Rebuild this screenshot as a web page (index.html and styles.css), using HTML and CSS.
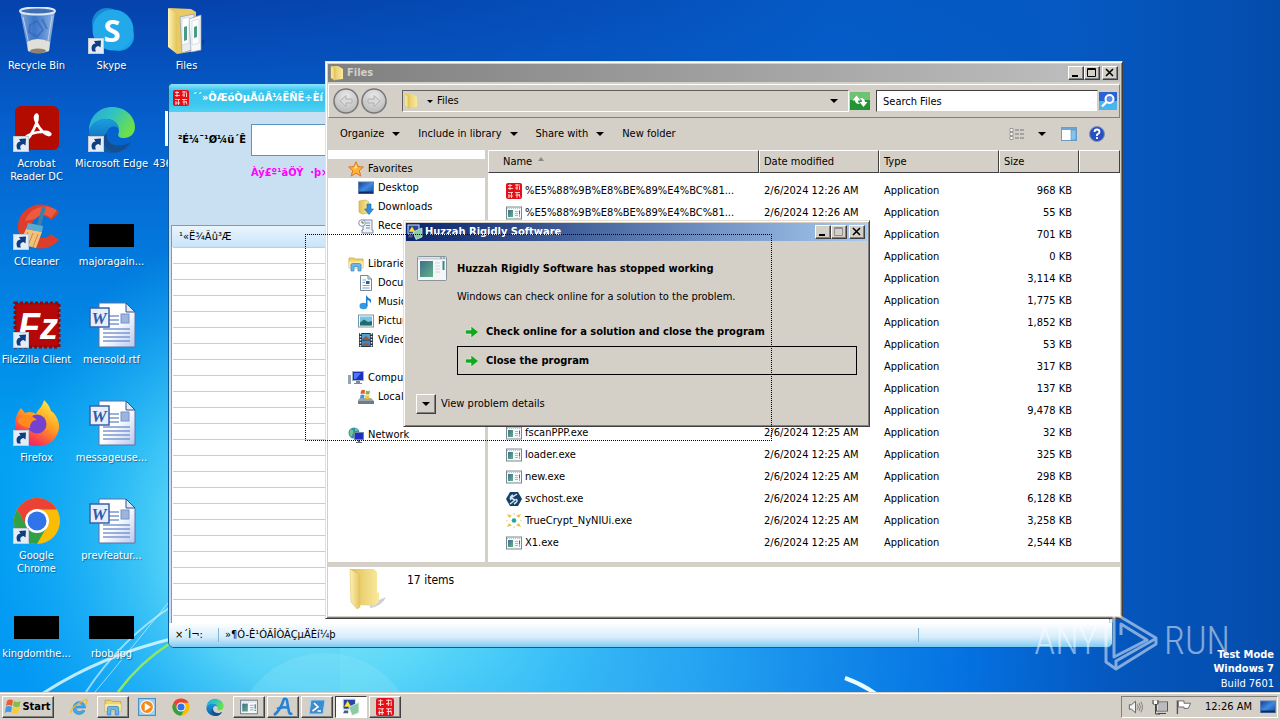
FILE: index.html
```html
<!DOCTYPE html>
<html lang="en">
<head>
<meta charset="utf-8">
<title>Desktop</title>
<link rel="stylesheet" href="styles.css">
</head>
<body>
<svg class="sprite" aria-hidden="true">
  <defs>
    <linearGradient id="gFold" x1="0" x2="1"><stop offset="0" stop-color="#fdf3b8"/><stop offset="1" stop-color="#e3c45a"/></linearGradient>
    <linearGradient id="gFoldB" x1="0" x2="1"><stop offset="0" stop-color="#e0bf55"/><stop offset="1" stop-color="#f9ea9d"/></linearGradient>
    <linearGradient id="gBin" x1="0" x2="1"><stop offset="0" stop-color="#a9c4e4" stop-opacity=".8"/><stop offset=".4" stop-color="#5f93d6" stop-opacity=".6"/><stop offset="1" stop-color="#b9d2ee" stop-opacity=".8"/></linearGradient>
    <linearGradient id="gEdge1" x1="0" y1="0" x2="1" y2=".5"><stop offset="0" stop-color="#2aa6e0"/><stop offset=".5" stop-color="#2fc3c0"/><stop offset="1" stop-color="#6be04a"/></linearGradient>
    <linearGradient id="gEdge2" x1="0" y1="0" x2="0" y2="1"><stop offset="0" stop-color="#1b9de2"/><stop offset="1" stop-color="#0c59a4"/></linearGradient>
    <linearGradient id="gFox" x1=".8" y1="0" x2=".2" y2="1"><stop offset="0" stop-color="#fff044"/><stop offset=".45" stop-color="#ff9a22"/><stop offset=".8" stop-color="#fb3a50"/><stop offset="1" stop-color="#e3158c"/></linearGradient>
    <linearGradient id="gDoc" x1="0" y1="0" x2="1" y2="1"><stop offset=".5" stop-color="#fff"/><stop offset="1" stop-color="#b5c8ee"/></linearGradient>
    <linearGradient id="gScr" x1="0" y1="0" x2="1" y2="1"><stop offset="0" stop-color="#123b96"/><stop offset=".5" stop-color="#3f8be0"/><stop offset="1" stop-color="#16469e"/></linearGradient>
    <linearGradient id="gApp" x1="0" y1="0" x2="1" y2="1"><stop offset="0" stop-color="#3d6f8e"/><stop offset="1" stop-color="#63b183"/></linearGradient>
    <radialGradient id="gNav" cx=".5" cy=".3" r=".7"><stop offset="0" stop-color="#e9e9e9"/><stop offset="1" stop-color="#b9b9b9"/></radialGradient>
  </defs>
  <symbol id="arrow" viewBox="0 0 16 16"><rect x=".5" y=".5" width="15" height="15" fill="#e4edf6" stroke="#c3ccd6"/><path d="M4.500 13.500C2.500 9 4 6 7.500 5.500L6 3 13 2.500 12.500 9.500 10.500 8C7.500 8.500 6.500 10.500 8 13.500Z" fill="#123c80"/></symbol>
  <symbol id="bin" viewBox="0 0 48 48"><path d="M7 4H42L36 44Q25 49 15 44Z" fill="url(#gBin)"/><ellipse cx="24.500" cy="4" rx="17.500" ry="3.500" fill="#3d6fb5" stroke="#dfe8f2" stroke-width="2"/><path d="M14 35Q24 29 37 35L36 44Q25 48 15 44Z" fill="#e2dfd8"/><ellipse cx="25" cy="44" rx="8" ry="2.500" fill="#8f8272"/><path d="M10 10L17 42M39 9L34 40" stroke="#dbe8f6" opacity=".7"/><path d="M17 18l7-4 6 9-6 7-8-5zM29 12l5 10" fill="none" stroke="#3064b8" stroke-width="2" opacity=".6"/></symbol>
  <symbol id="skype" viewBox="0 0 48 48"><rect x="4" y="1" width="30" height="30" rx="15" fill="#1789d0"/><circle cx="31" cy="29" r="15" fill="#16a4e8"/><circle cx="25" cy="23" r="20.500" fill="#22a9ea"/></symbol>
  <symbol id="files" viewBox="0 0 48 48"><path d="M28 38L42 32Q40 44 26 46Z" fill="#0a2c66" opacity=".35"/><path d="M6 1L28 2 33 5V44L14 47Z" fill="#e8c963"/><path d="M17 10L31 7V42L19 46Z" fill="#e9edf2" stroke="#8f9aa6" stroke-width=".7"/><path d="M26 12L38 8V43L28 45Z" fill="#f6f8fa" stroke="#9aa4ae" stroke-width=".7"/><path d="M19 12L26 10V36L19 38ZM29 14L36 12V36L29 38Z" fill="#fff" stroke="#c5ccd4" stroke-width=".6"/><path d="M21 20l3-1V33l-3 1zM31 20l3-1v11l-3 1z" fill="#4a9b86"/><path d="M5 1L14 7V47L5 40Z" fill="url(#gFold)"/></symbol>
  <symbol id="acrobat" viewBox="0 0 48 48"><rect x="2" y="1" width="44" height="44" rx="6" fill="#b30b00"/><path d="M23 10C20 13 25 22 30 27 38 33 40 28 33 27 24 26 15 29 11 34 8 38 13 37 17 31 22 23 25 15 24.500 11 24 9 23.500 9.500 23 10Z" fill="none" stroke="#fff" stroke-width="2.800"/></symbol>
  <symbol id="edge" viewBox="0 0 48 48"><path d="M1 26C1 12 11 2 24 2 38 2 47 12 47 22 47 29 42 33 36 33 31 33 29 31 31 27 31 19 26 14 19 14 10 14 3 19 1 26Z" fill="url(#gEdge1)"/><path d="M1 26C3 18 11 13 19 14 27 15 30 19 31 24 25 18 17 24 19 32 21 40 33 43 43 37 38 45 31 48 24 48 11 48 1 38 1 26Z" fill="url(#gEdge2)"/><path d="M19 28C17 38 28 45 43 37 38 45 31 48 25 47 15 45 12 32 19 28Z" fill="#144f93"/></symbol>
  <symbol id="ccleaner" viewBox="0 0 48 48"><path d="M46 10A23 22 0 1 0 46 37L38 31A11 11 0 1 1 38 17Z" fill="#dd3d2b"/><path d="M44 7A21 20 0 0 0 12 18L22 16Q30 8 38 15Z" fill="#f2684a" opacity=".7"/><path d="M31 4L26 22" stroke="#3c80a8" stroke-width="4"/><path d="M15 20L30 23 29 29 13 26Z" fill="#5baad0"/><path d="M13 26L29 29 23 45 3 40Q10 34 13 26Z" fill="#f1c27a"/><path d="M15 29L9 41M20 30L15 43M25 31L20 44" stroke="#cc8a45"/></symbol>
  <symbol id="filezilla" viewBox="0 0 48 48"><rect x="2" y="2" width="44" height="44" fill="#b50808" stroke="#8d0a0a" stroke-width="3" stroke-dasharray="3 2"/></symbol>
  <symbol id="word" viewBox="0 0 48 48"><path d="M11 2H38L47 11V46H11Z" fill="url(#gDoc)" stroke="#5873a8"/><path d="M38 2V11H47Z" fill="#dfe8f8" stroke="#33508a"/><path d="M21 15H31M21 19H31M15 23H31M15 28H42M15 32H42M15 36H42M15 40H42" stroke="#7b98cf" stroke-width="1.300"/><rect x="33" y="13" width="8" height="9" fill="#9cb5df" stroke="#7592c8"/><rect x="2" y="7" width="19" height="19" fill="#e7eefb" stroke="#3a60a8" stroke-width="1.500"/></symbol>
  <symbol id="firefox" viewBox="0 0 48 48"><path d="M31 1C35 5 37 8 38 12 43 15 47 23 46 30 43 42 35 47 25 47 11 47 2 38 2 26 2 18 5 13 8 9L12 14C16 12 20 13 23 15 25 10 29 9 31 1Z" fill="url(#gFox)"/><circle cx="24" cy="25" r="9.500" fill="#7542cf"/><path d="M4 22Q9 14 19 17L24 21Q17 21 17 29 10 29 4 22Z" fill="#ff8b1c"/></symbol>
  <symbol id="chrome" viewBox="0 0 48 48"><circle cx="24" cy="24" r="23" fill="#fbbc05"/><path d="M24 12.500H43.900A23 23 0 0 0 4.100 12.500L14 30Z" fill="#ea4335"/><path d="M4.100 12.500A23 23 0 0 0 24 47L34 29.500 24 24 14 29.500Z" fill="#34a045"/><circle cx="24" cy="24" r="12" fill="#fff"/><circle cx="24" cy="24" r="9.500" fill="#2f74e8"/></symbol>
  <symbol id="seal" viewBox="0 0 16 16"><rect width="16" height="16" rx="2" fill="#e60f17"/><path d="M2 2.500H6M4 1V7M2 5.500H7M9 2H14M11 1V7M13.500 3V7M9 5H12M2 9.500H7M3 11V15M5.500 9V15M2 13H7M9 9.500H14M9.500 12H14M11 9V15M13 11L14 14.500" stroke="#ffdcd8" stroke-width=".9" fill="none"/></symbol>
  <symbol id="app" viewBox="0 0 16 13"><rect x=".5" y=".5" width="15" height="12" fill="#f6f8f9" stroke="#7b8894"/><path d="M1 2H15" stroke="#b8c3cc" stroke-dasharray="1 1"/><rect x="2" y="3.500" width="5" height="7" fill="url(#gApp)"/><path d="M9 5H12M9 7H12M9 9H12" stroke="#a9b8c2"/><path d="M13.500 4V8M13.500 9V10" stroke="#3b6f80"/></symbol>
  <symbol id="bigapp" viewBox="0 0 31 26"><rect x=".5" y=".5" width="29" height="24" rx="1" fill="#f4f6f7" stroke="#8a949c"/><path d="M1 2.500H29" stroke="#c9d2d8" stroke-width="2"/><path d="M23 2H25M26 2H28" stroke="#4f86a8"/><rect x="3" y="5" width="13" height="16" fill="url(#gApp)"/><path d="M18 7H23M18 10H23M18 13H23M18 16H23" stroke="#cfd8dd"/><path d="M26.500 5V14" stroke="#3c8a86" stroke-width="2"/></symbol>
  <symbol id="folder" viewBox="0 0 16 16"><path d="M2 1H9L14 4V14L6 15Z" fill="url(#gFoldB)"/><path d="M2 1L6 4V15.500L2 13Z" fill="url(#gFold)" stroke="#d8b94a" stroke-width=".4"/></symbol>
  <symbol id="bigfolder" viewBox="0 0 40 42"><path d="M22 36L38 29Q34 38 22 40Z" fill="#8b95a8" opacity=".45"/><path d="M2 1H26L29 4V25L31 24V34L26 38 12 37Z" fill="url(#gFoldB)"/><path d="M2 1L12 7V39L9 41 3 34Z" fill="url(#gFold)" stroke="#dfc564" stroke-width=".6"/></symbol>
  <symbol id="star" viewBox="0 0 16 16"><path d="M8 .8L10.100 5.600 15.400 6 11.300 9.500 12.700 15 8 12 3.300 15 4.700 9.500 .6 6 5.900 5.600Z" fill="#ffb733" stroke="#e0702a"/><path d="M8 3L9 6.500 6 8Z" fill="#ffe9a0"/></symbol>
  <symbol id="desk" viewBox="0 0 16 13"><rect x=".5" y=".5" width="15" height="11.500" fill="url(#gScr)" stroke="#5a7fae"/><path d="M1 11H15" stroke="#0e2b63" stroke-width="2"/></symbol>
  <symbol id="down" viewBox="0 0 16 16"><path d="M1 2L8 1 11 3V14L4 15 1 13Z" fill="url(#gFoldB)" stroke="#c9a742" stroke-width=".6"/><path d="M9 5H13V10H15.500L11 15.500 6.500 10H9Z" fill="#2f8fe0" stroke="#1c63ae" stroke-width=".6"/></symbol>
  <symbol id="recent" viewBox="0 0 16 16"><path d="M5 2H14V12H15V15H4V12H5Z" fill="#eef1f6" stroke="#7f8ba0"/><path d="M8 5H12M8 7.500H12M8 10H12" stroke="#6f8eb8"/><circle cx="4" cy="5" r="3.300" fill="#f6f8fb" stroke="#8c97a8"/><path d="M4 3V5H6" stroke="#445" fill="none" stroke-width=".8"/></symbol>
  <symbol id="lib" viewBox="0 0 16 16"><path d="M1 2H6L7 3H15V12H1Z" fill="#f1d56b" stroke="#c29c38" stroke-width=".7"/><path d="M1 5.500H15V12H1Z" fill="#fbeaa0"/><path d="M3 15V9Q3 7.500 4.500 7.500H11.500Q13 7.500 13 9V15H10V10.500H6V15Z" fill="#68b6ea" stroke="#3484c4" stroke-width=".7"/></symbol>
  <symbol id="doc" viewBox="0 0 16 16"><path d="M2.500 .5H10L13.500 4V15.500H2.500Z" fill="#f9fbfd" stroke="#78879a"/><path d="M10 .5V4H13.500" fill="none" stroke="#78879a"/><path d="M4.500 5H8M4.500 10.500H11.500M4.500 13H11.500M4.500 7.500H7" stroke="#7fa3cf"/><rect x="8" y="6" width="3.500" height="3" fill="#2f5f8f"/></symbol>
  <symbol id="music" viewBox="0 0 16 16"><ellipse cx="5.500" cy="12" rx="4" ry="3.200" fill="#2f9be6"/><path d="M8 12V1Q10 4 12.500 5 14 7 12 9.500 12.500 6.500 9.500 6V12Z" fill="#1e7fd0"/></symbol>
  <symbol id="pic" viewBox="0 0 16 13"><rect x=".5" y=".5" width="15" height="12" fill="#fff" stroke="#7895a8"/><rect x="2" y="2" width="12" height="9" fill="#77c4e4"/><path d="M2 8L6 5 10 7.500 14 6.500V11H2Z" fill="#236c6e"/></symbol>
  <symbol id="film" viewBox="0 0 16 16"><rect x="1" y="1" width="14" height="14" fill="#2c3440"/><path d="M2.500 1V15M13.500 1V15" stroke="#e8edf2" stroke-width="1.500" stroke-dasharray="1.500 1.500"/><rect x="4" y="2" width="8" height="5.500" fill="#4aa2d8"/><rect x="4" y="8.500" width="8" height="5.500" fill="#3c86c4"/><path d="M4 7L8 4 12 7.500H4ZM4 13.500L8 10.500 12 14H4Z" fill="#985a3c"/></symbol>
  <symbol id="comp" viewBox="0 0 16 16"><rect x="0" y="5" width="3" height="9" fill="#9aa3ae"/><rect x="4.500" y="1.500" width="11" height="9" fill="#1c2fc2" stroke="#9fb0c8"/><path d="M6 3L13 3 8 9H6Z" fill="#4f79ee"/><path d="M8 11H12V13H14V14H6V13H8Z" fill="#7e8894"/></symbol>
  <symbol id="disk" viewBox="0 0 16 16"><path d="M2 9H13L16 12V15H0V11Z" fill="#9ba7ac"/><path d="M0 12H16V15H0Z" fill="#6d7d82"/><path d="M3 2Q5 0 7 1.500L6.500 5Q4.500 4 2.500 5Z" fill="#e8562b"/><path d="M8 1.500Q10 3 12 1.500L11.500 5Q9.500 6 7.500 5Z" fill="#7ab942"/><path d="M2.500 6Q4.500 5 6.500 6L6 9.500Q4 8.500 2 9.500Z" fill="#3f95dc"/><path d="M7.500 6Q9.500 7 11.500 6L11 9.500Q9 10.500 7 9.500Z" fill="#f8c22c"/></symbol>
  <symbol id="net" viewBox="0 0 16 16"><circle cx="6" cy="6" r="5.500" fill="#2f8ebd"/><path d="M3 2Q6 3 5 6T3 10Q0 6 3 2ZM7 1Q10 2 10 4L7 4Z" fill="#74c878"/><rect x="6.500" y="5.500" width="9" height="7" fill="#1c2fc2" stroke="#6f86a8"/><path d="M10 13H12V15H14V16H8V15H10Z" fill="#5e6874"/></symbol>
  <symbol id="hex" viewBox="0 0 16 16"><path d="M4 1H12L16 8 12 15H4L0 8Z" fill="#153f6b"/><path d="M11 3L5 7 9 9 4 13M7 4Q3 6 5 9M10 8Q13 10 8 13" stroke="#d3e5f4" stroke-width="1.500" fill="none"/></symbol>
  <symbol id="truec" viewBox="0 0 16 16"><path d="M1 1L6 2.500 3 5ZM15 1L10 2.500 13 5ZM1 14L6 12.500 3 10ZM15 14L10 12.500 13 10Z" fill="#edc53a"/><circle cx="8" cy="7.500" r="2.300" fill="#22a79c"/><path d="M7 1H9M7 14H9M1 7V8.500M15 7V8.500" stroke="#d8d36a"/></symbol>
  <symbol id="crash" viewBox="0 0 16 16"><rect x="1" y="1" width="11" height="9" fill="#2346a8" stroke="#d7e2f4"/><path d="M5 2L8.500 8H1.500Z" fill="#ffe23b" stroke="#222" stroke-width=".4"/><path d="M6 8L15 4V13L9 15.500Z" fill="#8cc9a4" stroke="#e2efe2" stroke-width=".7"/><path d="M2 11H5.500V13.500H1Z" fill="#445a80"/></symbol>
  <symbol id="go" viewBox="0 0 14 14"><path d="M.5 5H6V1L13.500 7 6 13V9H.5Z" fill="#12a81e" stroke="#e4f6e2" stroke-width=".6"/></symbol>
  <symbol id="flag" viewBox="0 0 16 16"><path d="M2 2Q5-.5 8 1.500L7 7Q4 5 1 7Z" fill="#ee5b2c"/><path d="M9 2Q12 4 15.500 2L14.500 7.500Q11 9 8 7Z" fill="#82c040"/><path d="M.8 8Q4 6 7 8L6 13.500Q3 12 0 14Z" fill="#3f9be4"/><path d="M8 8.500Q11 10.500 14.500 8.500L13 14Q10 16 7 14Z" fill="#fccb2e"/></symbol>
  <symbol id="ie" viewBox="0 0 18 18"><path d="M15.500 10H6Q6 13.500 9.500 13.500 11.500 13.500 12.500 12L15 13Q13 16.500 9 16.500 3 16 3 10 3.500 4 9.500 3.500 15.500 4 15.500 10ZM6.200 8H12.500Q12 5.800 9.300 5.800 7 5.800 6.200 8Z" fill="#3fa9e8" stroke="#2478be" stroke-width=".5" fill-rule="evenodd"/><path d="M1 15Q-1 12 8 6T17 2Q18 4 15 7" fill="none" stroke="#f0bb2e" stroke-width="1.300"/></symbol>
  <symbol id="media" viewBox="0 0 16 16"><rect x=".5" y=".5" width="15" height="15" fill="#9fd0f0" stroke="#4a8fc4"/><circle cx="8" cy="8" r="5.800" fill="#f58a1f" stroke="#fff"/><path d="M6 4.500L11.500 8 6 11.500Z" fill="#fff"/></symbol>
  <symbol id="ascript" viewBox="0 0 22 20"><path d="M2 18Q8 14 12 2Q15 1 15 4L17 15Q18 18 20 16M5 12Q11 9 17 11" fill="none" stroke="#2383d6" stroke-width="2.600"/></symbol>
  <symbol id="ps" viewBox="0 0 18 16"><path d="M3 1H17L15 15H1Z" fill="#3c8ccf" stroke="#a6d4f4"/><path d="M6 4L10 8 4.500 12M9.500 12H13" fill="none" stroke="#fff" stroke-width="1.600"/></symbol>
  <symbol id="vol" viewBox="0 0 18 16"><path d="M1.500 5.500H4L8.500 1.500V14.500L4 10.500H1.500Z" fill="#f4f4f2" stroke="#555"/><path d="M10.500 5Q12.500 8 10.500 11M12.500 3.500Q15.500 8 12.500 12.500M14.500 2Q18 8 14.500 14" fill="none" stroke="#777"/></symbol>
  <symbol id="lan" viewBox="0 0 16 16"><rect x="5" y="3.500" width="10.500" height="8" fill="#bbb" stroke="#fff"/><rect x="4.500" y="3" width="11" height="9" fill="none" stroke="#555"/><path d="M1 1V5H6V1M3.500 5V15H8M6 14.500H14" fill="none" stroke="#444"/><path d="M2 2H5V5H2Z" fill="#fff"/></symbol>
  <symbol id="pennant" viewBox="0 0 17 16"><path d="M1.500 1V15.500" stroke="#555" stroke-width="1.500"/><path d="M2.500 1.500H8.500V4H15.500L13 9.500H8.500V8H2.500Z" fill="#fff" stroke="#666"/></symbol>
  <symbol id="search" viewBox="0 0 18 18"><rect width="18" height="18" fill="#2a63d2"/><path d="M0 9H18V18H0Z" fill="#4ab4ee"/><circle cx="10.500" cy="7" r="4" fill="#5a8be8" stroke="#fff" stroke-width="2"/><path d="M7.500 10L3 14.500" stroke="#fff" stroke-width="2.400"/></symbol>
  <symbol id="refresh" viewBox="0 0 20 18"><rect width="20" height="18" fill="#229532"/><path d="M0 0H20V8H0Z" fill="#6dc274"/><path d="M2.500 8.500L6.500 3.500 10.500 8.500H8Q8 10.500 10 12 5 12 5 8.500ZM17.500 10L13.500 15 9.500 10H12Q12 7.500 10 6 15 6 15 10Z" fill="#fff"/></symbol>
  <symbol id="help" viewBox="0 0 16 16"><circle cx="8" cy="8" r="7.500" fill="#2a4fc0" stroke="#7f92b8"/><path d="M5.500 6Q5.500 3.500 8 3.500T10.500 6Q10.500 7.500 8 8.500V10M8 11V13" fill="none" stroke="#fff" stroke-width="1.800"/></symbol>
  <symbol id="pane" viewBox="0 0 16 14"><rect x=".5" y=".5" width="15" height="13" fill="#fff" stroke="#6f9cc4"/><path d="M1 2H15" stroke="#3b87c8" stroke-width="1.500"/><rect x="10" y="3" width="5" height="10" fill="#86c3ea" stroke="#4d8fc0" stroke-width=".6"/></symbol>
  <symbol id="views" viewBox="0 0 16 12"><path d="M1 .5H4V3.500H1ZM1 4.500H4V7.500H1ZM1 8.500H4V11.500H1Z" fill="#fff" stroke="#888" stroke-width=".8"/><path d="M6 2H15M6 6H15M6 10H15" stroke="#777" stroke-dasharray="4 1"/></symbol>
  <symbol id="caret" viewBox="0 0 8 4"><path d="M0 0H8L4 4Z"/></symbol>
  <symbol id="min" viewBox="0 0 12 11"><path d="M2 8H8" stroke="currentColor" stroke-width="2"/></symbol>
  <symbol id="max" viewBox="0 0 12 11"><path d="M1.500 .5H9.500V8.500H1.500ZM2 1.500H9" fill="none" stroke="currentColor"/></symbol>
  <symbol id="x" viewBox="0 0 12 11"><path d="M2 1L9 8M9 1L2 8" stroke="currentColor" stroke-width="1.600"/></symbol>
</svg>

<main class="desktop">
  <svg class="wallpaper" viewBox="0 0 1280 692" preserveAspectRatio="none" aria-hidden="true">
    <defs>
      <linearGradient id="wBase" x1="0" y1="0" x2="0" y2="1"><stop offset="0" stop-color="#0542ac"/><stop offset=".18" stop-color="#0560cd"/><stop offset=".45" stop-color="#0284e4"/><stop offset=".65" stop-color="#02a0f2"/><stop offset="1" stop-color="#0398f4"/></linearGradient>
      <linearGradient id="wRight" x1="0" y1="0" x2="1" y2="0"><stop offset=".15" stop-color="#0652bc" stop-opacity="0"/><stop offset=".65" stop-color="#0560cc" stop-opacity=".8"/><stop offset=".85" stop-color="#0558c0"/><stop offset="1" stop-color="#044cac"/></linearGradient>
      <radialGradient id="wGlow" gradientUnits="userSpaceOnUse" cx="320" cy="540" r="330"><stop offset="0" stop-color="#a0f2fa"/><stop offset=".45" stop-color="#62dcf8" stop-opacity=".85"/><stop offset="1" stop-color="#20b8f8" stop-opacity="0"/></radialGradient>
      <radialGradient id="wLow" gradientUnits="userSpaceOnUse" cx="480" cy="640" r="650"><stop offset="0" stop-color="#48c8f8"/><stop offset=".35" stop-color="#28a8f4" stop-opacity=".9"/><stop offset=".75" stop-color="#0478ea" stop-opacity=".7"/><stop offset="1" stop-color="#0468d8" stop-opacity="0"/></radialGradient>
    </defs>
    <rect width="1280" height="692" fill="url(#wBase)"/>
    <rect width="1280" height="692" fill="url(#wRight)"/>
    <rect x="340" y="500" width="940" height="192" fill="url(#wLow)"/>
    <rect width="1280" height="692" fill="url(#wGlow)"/>
    <circle cx="325" cy="745" r="92" fill="#8ae4fa" opacity=".3"/>
    <g fill="none" stroke="#e8fbff">
      <path d="M42 694Q100 656 175 638" stroke-width="3" opacity=".8"/>
      <path d="M86 692Q120 640 172 606" stroke-width="2" opacity=".6"/>
      <path d="M95 692Q130 650 172 598" opacity=".6"/>
      <path d="M118 692Q140 662 172 642" stroke="#8fe85e" stroke-width="2.500"/>
      <path d="M845 678Q862 684 876 694" stroke-width="4"/>
    </g>
  </svg>

  <ul class="icons">
    <li><svg class="pic"><use href="#bin"/></svg><span>Recycle Bin</span></li>
    <li><svg class="pic" viewBox="0 0 48 48"><use href="#skype"/><text x="24" y="35" class="g-skype">S</text></svg><svg class="short"><use href="#arrow"/></svg><span>Skype</span></li>
    <li><svg class="pic"><use href="#files"/></svg><span>Files</span></li>
    <li><svg class="pic"><use href="#acrobat"/></svg><svg class="short"><use href="#arrow"/></svg><span>Acrobat Reader DC</span></li>
    <li><svg class="pic"><use href="#edge"/></svg><svg class="short"><use href="#arrow"/></svg><span class="one">Microsoft Edge</span></li>
    <li class="behind"><i class="sheet"></i><span>436</span></li>
    <li><svg class="pic"><use href="#ccleaner"/></svg><svg class="short"><use href="#arrow"/></svg><span>CCleaner</span></li>
    <li><i class="black"></i><span>majoragain...</span></li>
    <li class="gap"></li>
    <li><svg class="pic" viewBox="0 0 48 48"><use href="#filezilla"/><text x="25" y="38" class="g-fz">Fz</text></svg><svg class="short"><use href="#arrow"/></svg><span class="one">FileZilla Client</span></li>
    <li><svg class="pic" viewBox="0 0 48 48"><use href="#word"/><text x="11" y="23" class="g-word">W</text></svg><span>mensold.rtf</span></li>
    <li class="gap"></li>
    <li><svg class="pic"><use href="#firefox"/></svg><svg class="short"><use href="#arrow"/></svg><span>Firefox</span></li>
    <li><svg class="pic" viewBox="0 0 48 48"><use href="#word"/><text x="11" y="23" class="g-word">W</text></svg><span class="one">messageuse...</span></li>
    <li class="gap"></li>
    <li><svg class="pic"><use href="#chrome"/></svg><svg class="short"><use href="#arrow"/></svg><span>Google Chrome</span></li>
    <li><svg class="pic" viewBox="0 0 48 48"><use href="#word"/><text x="11" y="23" class="g-word">W</text></svg><span>prevfeatur...</span></li>
    <li class="gap"></li>
    <li><i class="black"></i><span>kingdomthe...</span></li>
    <li><i class="black"></i><span>rbob.jpg</span></li>
  </ul>

  <section class="tool">
    <header class="tool-title"><svg class="i16"><use href="#seal"/></svg><h2>´´»ÔÆóÒµÃûÂ¼ËÑË÷Èí</h2></header>
    <div class="tool-form">
      <label for="kw">²É¼¯¹Ø¼ü´Ê</label>
      <input id="kw" type="text">
      <p>Àý£º¹ãÖÝ&nbsp; ·þ×</p>
    </div>
    <div class="tool-list">
      <div class="tool-head">¹«Ë¾Ãû³Æ</div>
      <div class="tool-rows"></div>
    </div>
    <footer class="tool-status"><span class="st">×´Ì¬:</span><span class="msg">»¶Ó-Ê¹ÓÃÎÒÃÇµÄÈí¼þ</span><span class="end"></span></footer>
  </section>

  <section class="window explorer">
    <header class="title"><svg class="i16"><use href="#folder"/></svg><h2>Files</h2>
      <button class="cap" aria-label="Minimize"><svg><use href="#min"/></svg></button><button class="cap" aria-label="Maximize"><svg><use href="#max"/></svg></button><button class="cap close" aria-label="Close"><svg><use href="#x"/></svg></button>
    </header>
    <nav class="navbar">
      <button class="round" aria-label="Back"><svg viewBox="0 0 26 26"><circle cx="13" cy="13" r="12" fill="url(#gNav)" stroke="#777" stroke-width="1.500"/><path d="M7 13L13 7.500V11H19V15H13V18.500Z" fill="#d9d9d9" stroke="#b0b0b0"/></svg></button>
      <button class="round" aria-label="Forward"><svg viewBox="0 0 26 26"><circle cx="13" cy="13" r="12" fill="url(#gNav)" stroke="#777" stroke-width="1.500"/><path d="M19 13L13 7.500V11H7V15H13V18.500Z" fill="#d9d9d9" stroke="#b0b0b0"/></svg></button>
      <div class="address"><svg class="i16"><use href="#folder"/></svg><svg class="caret small"><use href="#caret"/></svg><span>Files</span><svg class="caret"><use href="#caret"/></svg></div>
      <button class="refresh" aria-label="Refresh"><svg><use href="#refresh"/></svg></button>
      <input class="find" type="text" aria-label="Search Files" value="Search Files">
      <button class="go" aria-label="Search"><svg><use href="#search"/></svg></button>
    </nav>
    <div class="toolbar">
      <button>Organize<svg class="caret"><use href="#caret"/></svg></button>
      <button>Include in library<svg class="caret"><use href="#caret"/></svg></button>
      <button>Share with<svg class="caret"><use href="#caret"/></svg></button>
      <button>New folder</button>
      <button class="right" aria-label="Change your view"><svg class="views"><use href="#views"/></svg><svg class="caret"><use href="#caret"/></svg></button>
      <button aria-label="Preview pane"><svg class="i16"><use href="#pane"/></svg></button>
      <button aria-label="Help"><svg class="i16"><use href="#help"/></svg></button>
    </div>
    <div class="content">
      <ul class="tree">
        <li class="top sel"><svg class="i16"><use href="#star"/></svg>Favorites</li>
        <li><svg class="i16"><use href="#desk"/></svg>Desktop</li>
        <li><svg class="i16"><use href="#down"/></svg>Downloads</li>
        <li><svg class="i16"><use href="#recent"/></svg>Rece</li>
        <li class="top space"><svg class="i16"><use href="#lib"/></svg>Libraries</li>
        <li><svg class="i16"><use href="#doc"/></svg>Documents</li>
        <li><svg class="i16"><use href="#music"/></svg>Music</li>
        <li><svg class="i16"><use href="#pic"/></svg>Pictures</li>
        <li><svg class="i16"><use href="#film"/></svg>Videos</li>
        <li class="top space"><svg class="i16"><use href="#comp"/></svg>Computer</li>
        <li><svg class="i16"><use href="#disk"/></svg>Local Disk</li>
        <li class="top space"><svg class="i16"><use href="#net"/></svg>Network</li>
      </ul>
      <div class="list">
        <table>
          <colgroup><col><col class="c-date"><col class="c-type"><col class="c-size"><col class="c-rest"></colgroup>
          <thead><tr><th class="n">Name<svg class="sort" viewBox="0 0 6 4"><path d="M0 4H6L3 0Z" fill="#888"/></svg></th><th>Date modified</th><th>Type</th><th>Size</th><th></th></tr></thead>
          <tbody>
            <tr><td class="n"><svg class="i16"><use href="#seal"/></svg>%E5%88%9B%E8%BE%89%E4%BC%81...</td><td>2/6/2024 12:26 AM</td><td>Application</td><td class="s">968 KB</td><td></td></tr>
            <tr><td class="n"><svg class="i16"><use href="#app"/></svg>%E5%88%9B%E8%BE%89%E4%BC%81...</td><td>2/6/2024 12:26 AM</td><td>Application</td><td class="s">55 KB</td><td></td></tr>
            <tr><td></td><td></td><td>Application</td><td class="s">701 KB</td><td></td></tr>
            <tr><td></td><td></td><td>Application</td><td class="s">0 KB</td><td></td></tr>
            <tr><td></td><td></td><td>Application</td><td class="s">3,114 KB</td><td></td></tr>
            <tr><td></td><td></td><td>Application</td><td class="s">1,775 KB</td><td></td></tr>
            <tr><td></td><td></td><td>Application</td><td class="s">1,852 KB</td><td></td></tr>
            <tr><td></td><td></td><td>Application</td><td class="s">53 KB</td><td></td></tr>
            <tr><td></td><td></td><td>Application</td><td class="s">317 KB</td><td></td></tr>
            <tr><td></td><td></td><td>Application</td><td class="s">137 KB</td><td></td></tr>
            <tr><td></td><td></td><td>Application</td><td class="s">9,478 KB</td><td></td></tr>
            <tr><td class="n"><svg class="i16"><use href="#app"/></svg>fscanPPP.exe</td><td>2/6/2024 12:25 AM</td><td>Application</td><td class="s">32 KB</td><td></td></tr>
            <tr><td class="n"><svg class="i16"><use href="#app"/></svg>loader.exe</td><td>2/6/2024 12:25 AM</td><td>Application</td><td class="s">325 KB</td><td></td></tr>
            <tr><td class="n"><svg class="i16"><use href="#app"/></svg>new.exe</td><td>2/6/2024 12:25 AM</td><td>Application</td><td class="s">298 KB</td><td></td></tr>
            <tr><td class="n"><svg class="i16"><use href="#hex"/></svg>svchost.exe</td><td>2/6/2024 12:25 AM</td><td>Application</td><td class="s">6,128 KB</td><td></td></tr>
            <tr><td class="n"><svg class="i16"><use href="#truec"/></svg>TrueCrypt_NyNIUi.exe</td><td>2/6/2024 12:25 AM</td><td>Application</td><td class="s">3,258 KB</td><td></td></tr>
            <tr><td class="n"><svg class="i16"><use href="#app"/></svg>X1.exe</td><td>2/6/2024 12:25 AM</td><td>Application</td><td class="s">2,544 KB</td><td></td></tr>
          </tbody>
        </table>
      </div>
    </div>
    <footer class="details"><svg><use href="#bigfolder"/></svg><span>17 items</span></footer>
  </section>

  <section class="window dialog" role="dialog" aria-labelledby="dlg">
    <header class="title active"><svg class="i16"><use href="#crash"/></svg><h2 id="dlg">Huzzah Rigidly Software</h2>
      <button class="cap" aria-label="Minimize"><svg><use href="#min"/></svg></button><button class="cap off" aria-label="Maximize" disabled><svg><use href="#max"/></svg></button><button class="cap close" aria-label="Close"><svg><use href="#x"/></svg></button>
    </header>
    <div class="dialog-body">
      <svg class="app-icon"><use href="#bigapp"/></svg>
      <div class="dialog-text">
        <h3>Huzzah Rigidly Software has stopped working</h3>
        <p>Windows can check online for a solution to the problem.</p>
        <button class="choice"><svg><use href="#go"/></svg>Check online for a solution and close the program</button>
        <button class="choice focus"><svg><use href="#go"/></svg>Close the program</button>
      </div>
    </div>
    <div class="more"><button id="exp" aria-label="View problem details"><svg class="caret"><use href="#caret"/></svg></button><label for="exp">View problem details</label></div>
  </section>

  <div class="marquee"></div>
  <div class="brand"><span>ANY</span><svg viewBox="0 0 54 60" fill="none" stroke="#fff" stroke-width="3" stroke-linejoin="round"><path d="M10 2L52 27V33L12 58 2 51V12L10 9ZM10 2V46L43 29 17 13V24M12 58V50L51 28"/></svg><span>RUN</span></div>
  <div class="version"><b>Test Mode</b><b>Windows 7</b><span>Build 7601</span></div>
</main>

<footer class="taskbar">
  <button class="start"><svg class="i16"><use href="#flag"/></svg>Start</button>
  <div class="apps">
    <button class="flat" aria-label="Internet Explorer"><svg><use href="#ie"/></svg></button>
    <button aria-label="Windows Explorer"><svg><use href="#lib"/></svg></button>
    <button class="flat" aria-label="Media Player"><svg><use href="#media"/></svg></button>
    <button class="flat" aria-label="Google Chrome"><svg><use href="#chrome"/></svg></button>
    <button class="flat" aria-label="Microsoft Edge"><svg><use href="#edge"/></svg></button>
    <button aria-label="Application"><svg><use href="#app"/></svg></button>
    <button aria-label="Font tool"><svg class="wide"><use href="#ascript"/></svg></button>
    <button aria-label="PowerShell"><svg><use href="#ps"/></svg></button>
    <button class="on" aria-label="Huzzah Rigidly Software"><svg><use href="#crash"/></svg></button>
    <button aria-label="Search tool"><svg><use href="#seal"/></svg></button>
  </div>
  <div class="tray"><svg class="i16"><use href="#vol"/></svg><svg class="i16"><use href="#lan"/></svg><svg class="i16"><use href="#pennant"/></svg><time>12:26 AM</time><svg class="i16"><use href="#desk"/></svg></div>
</footer>
</body>
</html>
```
FILE: styles.css
```css
* { box-sizing: border-box; }
html, body { height: 100%; margin: 0; }
body {
  display: flex;
  flex-direction: column;
  overflow: hidden;
  font: 11px/14px "DejaVu Sans Condensed", "DejaVu Sans", sans-serif;
  color: #000;
}
h2, h3, p, ul { margin: 0; padding: 0; font-size: inherit; list-style: none; }
button, input { font: inherit; color: inherit; margin: 0; padding: 0; border: 0; border-radius: 0; }
button { background: none; }
svg { display: block; flex: none; }
.sprite { position: absolute; width: 0; height: 0; }
.i16 { width: 16px; height: 16px; }
.g-skype { font: bold 31px "Open Sans", sans-serif; fill: #fff; text-anchor: middle; text-shadow: none; }
.g-fz { font: italic bold 36px "Liberation Sans", sans-serif; fill: #fff; text-anchor: middle; text-shadow: none; }
.g-word { font: italic bold 17px "Liberation Serif", serif; fill: #3359a6; text-anchor: middle; text-shadow: none; }
.caret { width: 8px; height: 4px; }
.caret.small { width: 6px; height: 3px; }

.desktop { position: relative; flex: 1; min-height: 0; overflow: hidden; background: #0568dc; }
.wallpaper { position: absolute; inset: 0; width: 100%; height: 100%; }

.icons {
  position: relative;
  display: grid;
  grid-template-columns: repeat(3, 73px);
  grid-auto-rows: 98px;
  column-gap: 2px;
  padding-top: 7px;
  width: max-content;
}
.icons li { position: relative; display: flex; flex-direction: column; align-items: center; color: #fff; text-align: center; line-height: 13px; text-shadow: 1px 1px 1px #0248; }
.icons .pic { width: 48px; height: 48px; margin-bottom: 4px; }
.icons .short { position: absolute; left: 13px; top: 31px; width: 16px; height: 16px; }
.icons .one { white-space: nowrap; }
.icons .black { width: 45px; height: 23px; margin: 21px 0 8px; background: #000; }
.icons .behind { align-items: flex-start; padding-left: 3px; }
.icons .sheet { width: 38px; height: 35px; margin: 6px 0 11px 12px; background: #fff; }

.tool {
  position: absolute;
  inset: 83px 167px 44px 168px;
  display: flex;
  flex-direction: column;
  border: 1px solid #155a96;
  border-radius: 5px 5px 6px 6px;
  background: #c9dff2;
  overflow: hidden;
}
.tool-title { display: flex; align-items: center; gap: 3px; height: 28px; padding: 0 4px; background: linear-gradient(#8de5fb, #35c5ee 25%, #3cc8ee 70%, #4fd2f2); color: #fff; white-space: nowrap; }
.tool-form { display: grid; grid-template-columns: 69px 1fr; column-gap: 4px; padding: 12px 9px 0; height: 113px; grid-template-rows: 32px 34px; align-items: center; font-weight: bold; white-space: nowrap; }
.tool-form input { height: 32px; border: 1px solid #5b93c4; background: #fff; }
.tool-form p { grid-column: 2; color: #f0f; }
.tool-list { flex: 1; margin: 0 2px; border: 1px solid #6aa0cc; background: #fff; border-bottom: 0; display: flex; flex-direction: column; }
.tool-head { height: 21px; padding: 4px 7px; background: linear-gradient(#eaf5fd, #c9e4f8); }
.tool-rows { flex: 1; margin-left: 1px; background: repeating-linear-gradient(#ccc 0 1px, #fff 1px 16px); }
.tool-status { display: flex; align-items: center; height: 24px; padding: 0 6px; background: linear-gradient(#fff, #d5ecfa 60%, #7ecbf4); }
.tool-status .st { width: 44px; border-right: 1px solid #87b5d6; }
.tool-status .msg { flex: 1; padding-left: 6px; border-right: 1px solid #87b5d6; }
.tool-status .end { width: 187px; }

.window { position: absolute; display: flex; flex-direction: column; padding: 2px; background: #d4d0c8; border: 1px solid; border-color: #e4e0d8 #404040 #404040 #e4e0d8; box-shadow: inset 1px 1px #fff, inset -1px -1px #808080; }
.explorer { left: 325px; right: 157px; top: 61px; }
.dialog { left: 403px; top: 220px; width: 467px; }

.title { display: flex; align-items: center; height: 18px; padding: 0 2px 0 1px; background: linear-gradient(90deg, #808080, #c0c0c0); color: #d4d0c8; }
.title h2 { flex: 1; padding-left: 2px; font-size: 11px; line-height: 16px; }
.title.active { background: linear-gradient(90deg, #0a246a, #a6caf0); color: #fff; }
.cap { width: 16px; height: 14px; padding: 1px; background: #d4d0c8; border: 1px solid; border-color: #fff #404040 #404040 #fff; box-shadow: inset -1px -1px #808080; color: #000; }
.cap svg { width: 12px; height: 11px; }
.cap.close { margin-left: 2px; }
.cap.off { color: #909090; }

.navbar { display: flex; align-items: center; height: 34px; margin-top: 2px; padding: 0 2px 0 4px; border: 1px solid; border-color: #fff #808080 #808080 #fff; }
.round { width: 26px; height: 26px; margin-right: 2px; }
.round svg { width: 26px; height: 26px; }
.address { display: flex; flex: 1; align-items: center; height: 22px; margin-left: 13px; border: 1px solid; border-color: #606060 #fff #fff #606060; padding-right: 10px; }
.address span { flex: 1; padding-left: 4px; }
.address .small { margin-left: 8px; }
.refresh svg { width: 20px; height: 18px; margin: 0 6px 0 1px; }
.find { width: 222px; height: 22px; padding: 0 6px; background: #fff; border: 1px solid; border-color: #404040 #d4d0c8 #d4d0c8 #404040; }
.go svg { width: 18px; height: 18px; margin-left: 1px; }

.toolbar { display: flex; align-items: center; gap: 18px; height: 32px; padding: 0 15px 0 12px; }
.toolbar button { display: flex; align-items: center; gap: 8px; white-space: nowrap; }
.toolbar .right { margin-left: auto; gap: 13px; }
.toolbar .right + button { margin-left: -3px; }
.toolbar .right + button + button { margin-left: -6px; }
.views { width: 16px; height: 12px; }

.content { display: flex; background: #fff; height: 412px; }
.tree { width: 160px; padding-top: 9px; border-right: 3px solid #d4d0c8; white-space: nowrap; overflow: hidden; }
.tree li { display: flex; align-items: center; gap: 4px; height: 19px; padding-left: 30px; }
.tree .top { padding-left: 20px; }
.tree .space { margin-top: 19px; }
.tree .sel { background: #d4d0c8; }
.list { flex: 1; min-width: 0; }
.list table { width: 100%; border-collapse: separate; border-spacing: 0; table-layout: fixed; }
.c-date, .c-type { width: 120px; }
.c-size { width: 80px; }
.c-rest { width: 41px; }
.list th { height: 23px; padding: 0 4px; background: #d4d0c8; font-weight: normal; text-align: left; border: 1px solid; border-color: #fff #404040 #404040 #fff; }
.list th.n { padding-left: 14px; }
.sort { display: inline-block; width: 6px; height: 4px; margin: 0 0 4px 6px; }
.list td { height: 22px; padding: 0 5px; white-space: nowrap; }
.list tbody::before { content: ""; display: block; height: 7px; }
.list td.n { padding-left: 18px; }
.list td .i16 { display: inline-block; vertical-align: middle; margin-right: 3px; }
.list td.s { text-align: right; padding-right: 7px; }
.details { display: flex; gap: 19px; height: 54px; padding: 1px 0 0 20px; background: #fff; border-top: 5px solid #d4d0c8; font-size: 12px; }
.details svg { width: 40px; height: 42px; }
.details span { padding-top: 5px; }

.dialog-body { display: flex; gap: 9px; padding: 15px 10px 0 11px; }
.app-icon { width: 31px; height: 26px; }
.dialog-text { flex: 1; }
.dialog-text h3 { padding-top: 6px; }
.dialog-text p { padding: 14px 0 13px; }
.choice { display: flex; align-items: center; gap: 7px; width: 100%; height: 29px; padding-left: 7px; border: 1px solid transparent; font-weight: bold; }
.choice svg { width: 14px; height: 14px; }
.focus { border-color: #000; }
.more { display: flex; align-items: center; gap: 5px; padding: 19px 10px 10px; }
.more button { display: flex; align-items: center; justify-content: center; width: 20px; height: 20px; border: 1px solid; border-color: #fff #404040 #404040 #fff; box-shadow: inset -1px -1px #808080; }

.marquee { position: absolute; left: 305px; top: 234px; width: 467px; height: 207px; border: 1px dotted #000; pointer-events: none; }
.version { position: absolute; right: 6px; bottom: 0; display: flex; flex-direction: column; align-items: flex-end; color: #fff; line-height: 14px; }
.version span { line-height: 16px; }
.brand { position: absolute; right: 50px; bottom: 21px; display: flex; align-items: center; gap: 6px; color: #fff; opacity: .5; font: 300 38px/60px "Roboto Condensed", "Liberation Sans Narrow", "Liberation Sans", sans-serif; }
.brand svg { width: 54px; height: 60px; }

.taskbar { position: relative; display: flex; align-items: center; height: 28px; padding: 3px 2px 1px; background: #d4d0c8; box-shadow: inset 0 1px #d4d0c8, inset 0 2px #fff; }
.start, .apps button { display: flex; align-items: center; justify-content: center; height: 22px; border: 1px solid; border-color: #fff #404040 #404040 #fff; box-shadow: inset -1px -1px #808080; }
.start { width: 52px; gap: 1px; font-weight: bold; }
.apps { display: flex; flex: 1; gap: 2px; padding-left: 9px; }
.apps button { width: 32px; }
.apps svg { width: 18px; height: 18px; }
.apps svg.wide { width: 22px; height: 20px; }
.apps .flat { border-color: transparent; box-shadow: none; }
.apps .on { background: #fff; border-color: #404040 #fff #fff #404040; box-shadow: none; }
.tray { display: flex; align-items: center; gap: 8px; height: 22px; padding: 0 1px 0 6px; border: 1px solid; border-color: #808080 #fff #fff #808080; }
.tray time { padding-left: 5px; }
```
